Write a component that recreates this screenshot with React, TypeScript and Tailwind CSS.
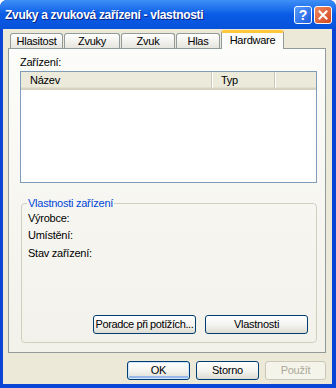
const btn =
  "h-[19px] rounded-[3px] border border-[#003C74] bg-gradient-to-b from-[#FFFFFF] via-[#F4F4F0] to-[#DEDDD4] flex items-center justify-center text-[11px] text-black leading-none whitespace-nowrap";

function Tab({ label, w, active }: { label: string; w: string; active?: boolean }) {
  if (active) {
    return (
      <div
        className={`${w} relative z-10 -mb-px h-[19px] rounded-t-[3px] border border-b-0 border-[#919B9C] border-t-[3px] border-t-[#FFC83C] bg-[#FCFCFA] flex items-center justify-center pb-[2px]`}
      >
        {label}
      </div>
    );
  }
  return (
    <div
      className={`${w} h-[15px] mr-px rounded-t-[3px] border border-b-0 border-[#919B9C] bg-gradient-to-b from-[#FFFFFF] to-[#E6E5DE] flex items-center justify-center`}
    >
      {label}
    </div>
  );
}

export default function App() {
  return (
    <div className="w-[336px] h-[388px] flex flex-col bg-[#0B45D6] rounded-t-[7px] overflow-hidden font-['Liberation_Sans',Arial,sans-serif] text-[11px] tracking-[-0.25px] text-black">
      {/* title bar */}
      <div className="h-[29px] shrink-0 flex items-center pl-[5px] pr-[4px] bg-gradient-to-b from-[#3E8FF6] via-[#0A5BE6] to-[#0852DA]">
        <span className="text-white font-bold text-[12px] tracking-[-0.3px] [text-shadow:1px_1px_#0B2585]">
          Zvuky a zvuková zařízení - vlastnosti
        </span>
        <div className="ml-auto flex gap-[2px]">
          <div className="w-[18px] h-[18px] rounded-[3px] border border-white bg-gradient-to-br from-[#5A9BFF] to-[#1C5BDD] flex items-center justify-center text-white font-bold text-[14px] leading-none">
            ?
          </div>
          <div className="w-[18px] h-[18px] rounded-[3px] border border-white bg-gradient-to-br from-[#F0875E] to-[#D2461E] flex items-center justify-center">
            <svg width="10" height="10" viewBox="0 0 10 10">
              <path d="M1.5 1.5 L8.5 8.5 M8.5 1.5 L1.5 8.5" stroke="white" strokeWidth="2" strokeLinecap="square" />
            </svg>
          </div>
        </div>
      </div>

      {/* body */}
      <div className="flex-1 ml-[3px] mr-[4px] mb-[4px] bg-[#ECE9D8] flex flex-col">
        <div className="flex items-end h-[19px] pl-[7px]">
          <Tab label="Hlasitost" w="w-[53px]" />
          <Tab label="Zvuky" w="w-[56px]" />
          <Tab label="Zvuk" w="w-[54px]" />
          <Tab label="Hlas" w="w-[44px]" />
          <Tab label="Hardware" w="w-[63px]" active />
        </div>

        <div className="ml-[5px] w-[318px] h-[305px] border border-[#919B9C] bg-gradient-to-b from-[#FCFCFA] to-[#F2F1EA]">
          <div className="pl-[11px] pt-[7px] leading-[13px]">Zařízení:</div>
          <div className="ml-[11px] mt-[2px] w-[297px] h-[112px] border border-[#7F9DB9] bg-white">
            <div className="flex h-[18px] bg-[#EBEADB] border-b-2 border-[#D6D2C2] shadow-[inset_0_-1px_#E2DFCF]">
              <div className="w-[191px] pl-[9px] flex items-center border-r border-[#CBC7B8] shadow-[1px_0_#FFFFFF]">
                Název
              </div>
              <div className="w-[63px] pl-[9px] flex items-center border-r border-[#CBC7B8] shadow-[1px_0_#FFFFFF]">
                Typ
              </div>
              <div className="flex-1" />
            </div>
          </div>

          <fieldset className="ml-[12px] mt-[14px] w-[296px] border border-[#D0D0BF] rounded-[4px] px-[5px]">
            <legend className="px-[1px] text-[#0046D5] leading-[13px]">Vlastnosti zařízení</legend>
            <div className="h-[132px] flex flex-col pl-[1px]">
              <div className="h-[17px] flex items-center">Výrobce:</div>
              <div className="h-[17px] flex items-center">Umístění:</div>
              <div className="h-[17px] flex items-center mt-px">Stav zařízení:</div>
              <div className="mt-auto mb-[8px] flex justify-end gap-[9px] pr-[3px]">
                <div className={`${btn} w-[103px] tracking-[-0.4px]`}>Poradce při potížích...</div>
                <div className={`${btn} w-[103px]`}>Vlastnosti</div>
              </div>
            </div>
          </fieldset>
        </div>

        <div className="flex justify-end gap-[6px] pr-[6px] pt-[8px]">
          <div className={`${btn} w-[63px] shadow-[inset_0_0_0_1px_#CEE7FF,inset_0_-2px_0_1px_#98B8EA]`}>OK</div>
          <div className={`${btn} w-[63px]`}>Storno</div>
          <div className="h-[19px] w-[61px] rounded-[3px] border border-[#C9C7BA] bg-[#F5F4EA] flex items-center justify-center text-[#ACA899]">
            Použít
          </div>
        </div>
      </div>
    </div>
  );
}
